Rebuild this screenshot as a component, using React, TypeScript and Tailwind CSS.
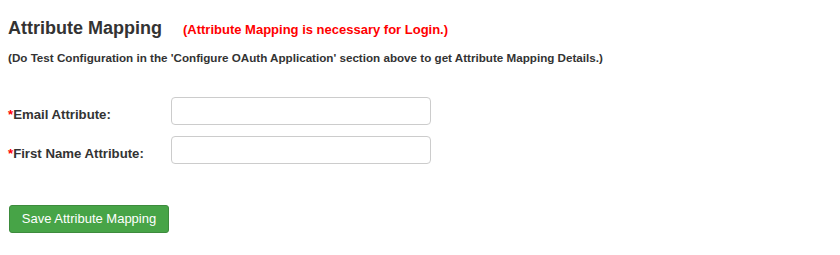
import React from 'react';

const fields = [
  { id: 'email', label: 'Email Attribute:' },
  { id: 'firstname', label: 'First Name Attribute:' },
];

const App: React.FC = () => {
  return (
    <div className="w-[840px] h-[255px] bg-white px-2 pt-[16px] font-['Liberation_Sans',Arial,sans-serif] text-[#333]">
      {/* Header */}
      <div className="flex items-baseline">
        <h3 className="text-[18px] leading-[24px] font-bold text-[#333]">Attribute Mapping</h3>
        <span className="ml-[21px] text-[13px] font-bold text-[#ff0000]">
          (Attribute Mapping is necessary for Login.)
        </span>
      </div>
      <p className="mt-[11px] text-[11.65px] leading-[14px] font-bold text-[#333]">
        (Do Test Configuration in the 'Configure OAuth Application' section above to get Attribute Mapping Details.)
      </p>

      {/* Fields */}
      <div className="mt-[32px] flex flex-col gap-[11px]">
        {fields.map((f) => (
          <div key={f.id} className="flex items-start">
            <label htmlFor={f.id} className="w-[163px] pt-[10px] leading-[15px] text-[13.2px] font-bold text-[#333]">
              <span className="text-[#ff0000]">*</span>
              {f.label}
            </label>
            <input
              id={f.id}
              type="text"
              className="w-[260px] h-[28px] rounded-[4px] border border-[#cccccc] bg-white px-2 text-[13px] outline-none"
            />
          </div>
        ))}
      </div>

      {/* Action */}
      <button
        type="button"
        className="mt-[41px] ml-px w-[160px] h-[28px] rounded-[3px] border border-[#3d8b3d] bg-[#47a447] text-[13px] text-white"
      >
        Save Attribute Mapping
      </button>
    </div>
  );
};

export default App;
